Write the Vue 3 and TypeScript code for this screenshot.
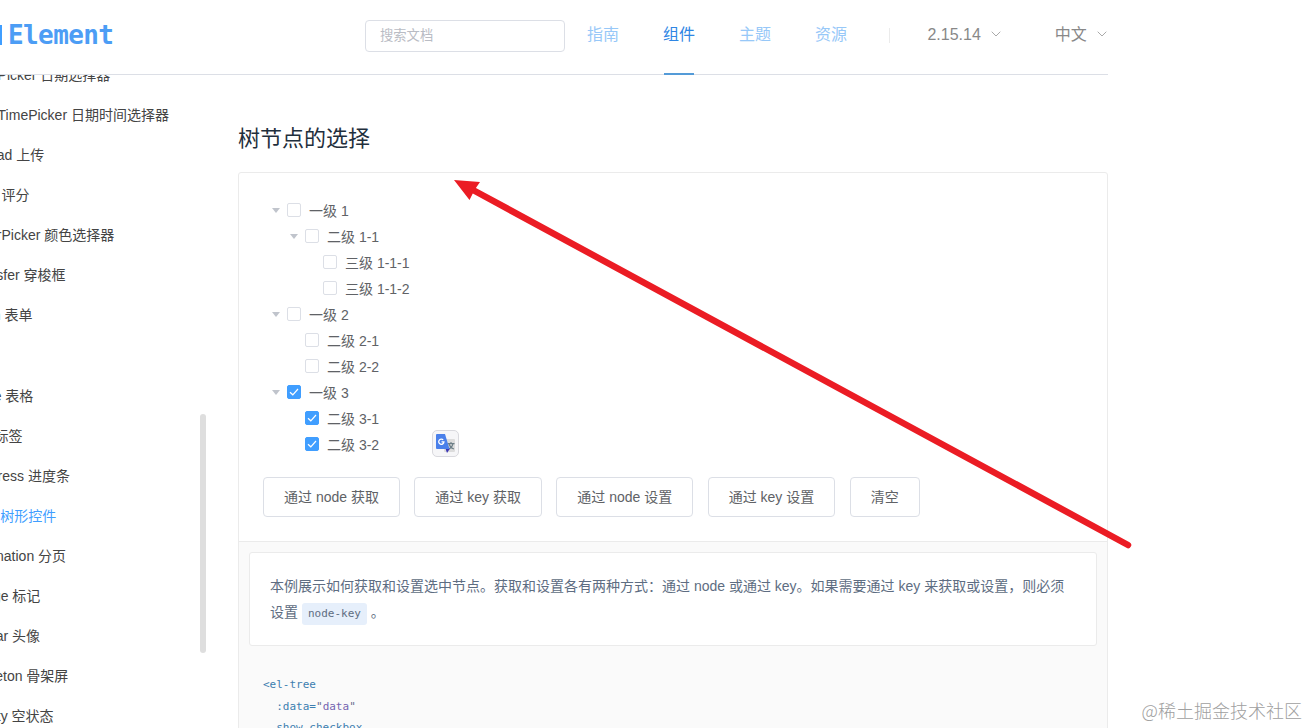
<script setup lang="ts">
interface TreeRow {
  label: string
  level: number
  open?: boolean
  checked?: boolean
}

const nav: { label: string; active?: boolean }[] = [
  { label: '指南' },
  { label: '组件', active: true },
  { label: '主题' },
  { label: '资源' },
]

const sideGroups: string[][] = [
  [
    'DatePicker 日期选择器',
    'DateTimePicker 日期时间选择器',
    'Upload 上传',
    'Rate 评分',
    'ColorPicker 颜色选择器',
    'Transfer 穿梭框',
    'Form 表单',
  ],
  [
    'Table 表格',
    'Tag 标签',
    'Progress 进度条',
    'Tree 树形控件',
    'Pagination 分页',
    'Badge 标记',
    'Avatar 头像',
    'Skeleton 骨架屏',
    'Empty 空状态',
  ],
]
const current = 'Tree 树形控件'

const rows: TreeRow[] = [
  { label: '一级 1', level: 0, open: true },
  { label: '二级 1-1', level: 1, open: true },
  { label: '三级 1-1-1', level: 2 },
  { label: '三级 1-1-2', level: 2 },
  { label: '一级 2', level: 0, open: true },
  { label: '二级 2-1', level: 1 },
  { label: '二级 2-2', level: 1 },
  { label: '一级 3', level: 0, open: true, checked: true },
  { label: '二级 3-1', level: 1, checked: true },
  { label: '二级 3-2', level: 1, checked: true },
]

const buttons: string[] = ['通过 node 获取', '通过 key 获取', '通过 node 设置', '通过 key 设置', '清空']
</script>

<template>
  <div class="page">
    <header class="header">
      <div class="logo"><i class="logo-mark"></i><span class="logo-text">Element</span></div>
      <div class="search">搜索文档</div>
      <nav class="nav">
        <a v-for="n in nav" :key="n.label" class="nav-item" :class="{ active: n.active }">{{ n.label }}</a>
      </nav>
      <i class="divider"></i>
      <div class="drop version">
        2.15.14<svg width="10" height="6" viewBox="0 0 10 6"><path d="M0.7 0.7 5 5 9.3 0.7" /></svg>
      </div>
      <div class="drop lang">
        中文<svg width="10" height="6" viewBox="0 0 10 6"><path d="M0.7 0.7 5 5 9.3 0.7" /></svg>
      </div>
    </header>

    <div class="body">
      <aside class="side">
        <ul v-for="(g, i) in sideGroups" :key="i" class="group">
          <li v-for="s in g" :key="s" :class="{ current: s === current }">{{ s }}</li>
        </ul>
      </aside>
      <i class="scroll-thumb"></i>

      <main class="content">
        <h3>树节点的选择</h3>
        <section class="demo">
          <div class="source">
            <div v-for="r in rows" :key="r.label" class="row" :class="'lv' + r.level">
              <span class="caret"><i v-if="r.open"></i></span>
              <span class="box" :class="{ checked: r.checked }">
                <svg v-if="r.checked" width="12" height="12" viewBox="0 0 12 12"><path d="M2 6.2 4.8 8.8 10 3" /></svg>
              </span>
              <span class="label">{{ r.label }}</span>
            </div>
            <div class="buttons">
              <button v-for="b in buttons" :key="b">{{ b }}</button>
            </div>
          </div>
          <div class="meta">
            <div class="desc">
              本例展示如何获取和设置选中节点。获取和设置各有两种方式：通过 node 或通过 key。如果需要通过 key 来获取或设置，则必须<br />设置
              <code>node-key</code> 。
            </div>
            <pre class="code"><span class="tag">&lt;el-tree</span>
  <span class="attr">:data=</span><span class="quote">"</span><span class="str">data</span><span class="quote">"</span>
  <span class="attr">show-checkbox</span></pre>
          </div>
        </section>
      </main>
    </div>

    <div class="translate">
      <svg width="19" height="19" viewBox="0 0 19 19">
        <rect x="8" y="5" width="11" height="13" rx="1" fill="#dcdcdc" />
        <path d="M11.5 9.6h7M15 8v1.600M17 9.600c-.5 2.600-2 4.400-4 5.400M13 10c.7 2.300 2.300 4 4.900 5" fill="none" stroke="#6d7f88" stroke-width="1.100" />
        <path d="M9.500 14.500h4.500l-3 4.500z" fill="#3a35b5" />
        <path d="M1 0h8l4.500 15H1q-1 0-1-1V1q0-1 1-1z" fill="#4a80ea" />
        <path d="M7.200 5.900A2.600 2.600 0 1 0 7.900 7.900H5.500" fill="none" stroke="#fff" stroke-width="1.300" />
      </svg>
    </div>

    <svg class="pointer" width="1309" height="728" viewBox="0 0 1309 728">
      <path d="M473 190 1128 545" stroke="#eb1c24" stroke-width="6.500" stroke-linecap="round" />
      <path d="M454 180 480 182 474.500 190 469.500 200z" fill="#eb1c24" />
    </svg>

    <div class="watermark">@稀土掘金技术社区</div>
  </div>
</template>

<style>
body {
  margin: 0;
  background: #fff;
}
</style>

<style scoped>
.page {
  position: relative;
  width: 1309px;
  height: 728px;
  overflow: hidden;
  background: #fff;
  font-family: 'Liberation Sans', 'Noto Sans CJK SC', sans-serif;
  font-size: 14px;
  color: #606266;
}
.header {
  box-sizing: border-box;
  width: 1108px;
  height: 75px;
  border-bottom: 1px solid #dcdfe6;
  display: flex;
  align-items: flex-start;
}
.logo {
  width: 365px;
  height: 70px;
  display: flex;
  align-items: center;
}
.logo-mark {
  width: 2px;
  height: 20px;
  background: #409eff;
  margin-right: 6px;
}
.logo-text {
  font: bold 26px/30px 'DejaVu Sans Mono', monospace;
  letter-spacing: -0.6px;
  color: #4c9df5;
}
.search {
  box-sizing: border-box;
  width: 200px;
  height: 32px;
  margin-top: 20px;
  padding-left: 14px;
  border: 1px solid #dcdfe6;
  border-radius: 4px;
  font-size: 13.300px;
  line-height: 29px;
  color: #b9bcc4;
}
.nav {
  display: flex;
  gap: 44px;
  margin-left: 22px;
}
.nav-item {
  box-sizing: border-box;
  width: 32px;
  height: 75px;
  line-height: 69px;
  font-size: 16px;
  color: #97c8f8;
  white-space: nowrap;
}
.nav-item.active {
  color: #2f86e4;
  background: linear-gradient(#549bd8, #549bd8) 1px 100% / 30px 2px no-repeat;
}
.divider {
  width: 1px;
  height: 15px;
  margin: 28px 0 0 42px;
  background: #ebebeb;
}
.drop {
  display: flex;
  align-items: center;
  height: 70px;
  font-size: 16px;
  line-height: 70px;
  color: #888;
  white-space: nowrap;
}
.drop svg {
  margin: 0 0 2px 10px;
}
.drop path {
  fill: none;
  stroke: #aaa;
  stroke-width: 1;
}
.version {
  margin-left: 37.400px;
}
.lang {
  margin-left: 54px;
}
.body {
  display: flex;
  height: 653px;
  overflow: hidden;
}
.side {
  width: 232px;
  margin: -20px 0 0 -32px;
  flex: none;
}
.group {
  list-style: none;
  margin: 0 0 41px;
  padding: 0;
}
.group li {
  height: 40px;
  line-height: 40px;
  color: #444;
  white-space: nowrap;
}
.group li.current {
  color: #409eff;
}
.scroll-thumb {
  flex: none;
  width: 6px;
  height: 239px;
  margin-top: 339px;
  border-radius: 3px;
  background: #dedede;
}
.content {
  width: 870px;
  margin-left: 32px;
  flex: none;
}
h3 {
  margin: 48px 0 0;
  height: 49px;
  line-height: 32px;
  font-size: 22px;
  font-weight: 400;
  color: #1f2f3d;
}
.demo {
  border: 1px solid #ebebeb;
  border-radius: 3px;
}
.source {
  padding: 25px 24px 24px;
}
.row {
  display: flex;
  align-items: center;
  height: 26px;
}
.lv1 {
  padding-left: 18px;
}
.lv2 {
  padding-left: 36px;
}
.caret {
  box-sizing: border-box;
  width: 24px;
  padding: 0 0 2px 1px;
  display: flex;
  justify-content: center;
}
.caret i {
  border: 4px solid transparent;
  border-top: 5px solid #c0c4cc;
  border-bottom: 0;
}
.box {
  box-sizing: border-box;
  width: 14px;
  height: 14px;
  border: 1px solid #dcdfe6;
  border-radius: 2px;
  margin: 0 8px 2px 0;
}
.box.checked {
  background: #409eff;
  border-color: #409eff;
}
.box svg {
  display: block;
}
.box path {
  fill: none;
  stroke: #fff;
  stroke-width: 1.200;
}
.label {
  line-height: 26px;
}
.buttons {
  display: flex;
  gap: 14.420px;
  margin-top: 19px;
}
button {
  height: 40px;
  padding: 0 20px;
  border: 1px solid #dcdfe6;
  border-radius: 4px;
  background: #fff;
  font: inherit;
  line-height: 38px;
  color: #606266;
  white-space: nowrap;
}
.meta {
  height: 260px;
  padding: 10px;
  border-top: 1px solid #ebebeb;
  background: #fafafa;
}
.desc {
  padding: 20px;
  border: 1px solid #ebebeb;
  border-radius: 3px;
  background: #fff;
  line-height: 26px;
  color: #5e6d82;
  white-space: nowrap;
}
code {
  display: inline-block;
  height: 22px;
  padding: 0 6px;
  border-radius: 3px;
  background: #e6effb;
  font: 11px/22px 'DejaVu Sans Mono', monospace;
}
.code {
  margin: 28px 0 0 14px;
  font: 11px/21.600px 'DejaVu Sans Mono', monospace;
}
.tag,
.attr {
  color: #3d7eb0;
}
.str {
  color: #7564b0;
}
.quote {
  color: #6a6a8c;
}
.translate {
  position: absolute;
  left: 432px;
  top: 430px;
  box-sizing: border-box;
  width: 27px;
  height: 27px;
  padding: 3px;
  border: 1px solid #d9d9de;
  border-radius: 5px;
  background: #f6f6f8;
}
.translate svg {
  display: block;
}
.pointer {
  position: absolute;
  left: 0;
  top: 0;
}
.watermark {
  position: absolute;
  right: 7px;
  top: 697px;
  font: 300 18px/26px 'Noto Sans CJK SC', sans-serif;
  color: #a0a0a0;
  white-space: nowrap;
}
</style>
